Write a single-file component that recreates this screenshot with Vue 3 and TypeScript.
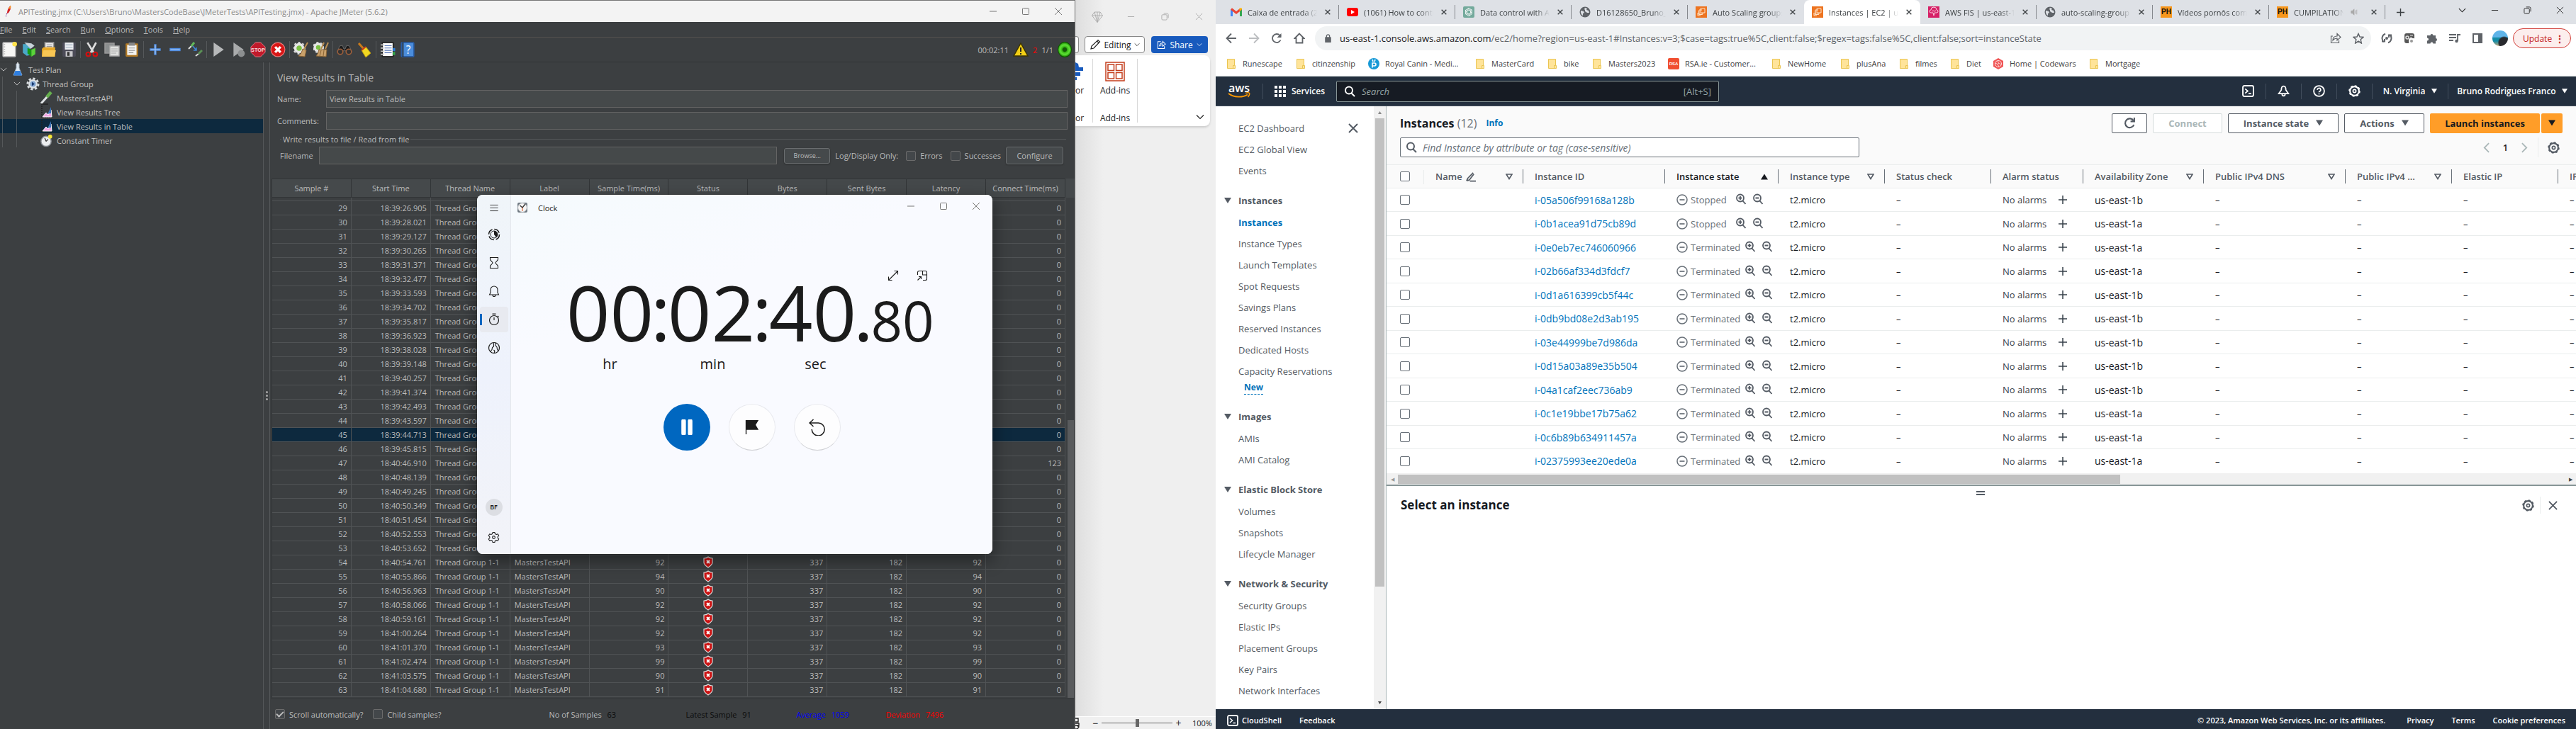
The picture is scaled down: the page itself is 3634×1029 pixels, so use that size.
<script setup lang="ts">
import { h } from 'vue'

const glyphs: Record<string, [string, string]> = {
  feather: ['0 0 16 24', '<path d="M12 1C8 4 6 9 5 16l3-1c3-4 5-9 4-14z" fill="#d22128" stroke="none"/><path d="M12 1c-2 2-3 4-4 7l4-2c1-2 0-4 0-5z" fill="#f69923" stroke="none"/><path d="M5 16l-2 6" stroke="#6d2f8c" stroke-dasharray="2 2"/>'],
  min: ['0 0 12 12', '<path d="M1 6h10" stroke-width="1"/>'],
  max: ['0 0 12 12', '<rect x="1.500" y="1.500" width="9" height="9" rx="1" stroke-width="1"/>'],
  restore: ['0 0 12 12', '<rect x="1" y="3" width="8" height="8" rx="1.500" stroke-width="1"/><path d="M4 1h5a2 2 0 0 1 2 2v5" stroke-width="1"/>'],
  close: ['0 0 12 12', '<path d="M1 1l10 10M11 1L1 11" stroke-width="1"/>'],
  closeBold: ['0 0 12 12', '<path d="M1 1l10 10M11 1L1 11" stroke-width="2"/>'],
  down: ['0 0 12 12', '<path d="M1 3.500l5 5 5-5" stroke-width="1.200"/>'],
  newFile: ['0 0 20 20', '<rect x="2" y="1" width="16" height="18" rx="1" fill="#f6f6f4" stroke="#bbb"/><path d="M4 3v14" stroke="#aaa" stroke-dasharray="1 2"/><circle cx="17" cy="3" r="3" fill="#ffe24a" stroke="none"/>'],
  templates: ['0 0 20 20', '<path d="M2 3h9v14l-4 1-5-4z" fill="#4aa8c8" stroke="none"/><path d="M4 1l9 1 4 3-5 4z" fill="#c8d4da" stroke="none"/><path d="M8 8l5 2v9l-5-4z" fill="#159a12" stroke="none"/><path d="M13 10l5-2v8l-5 3z" fill="#5ad33a" stroke="none"/>'],
  open: ['0 0 20 20', '<path d="M5 1h11v8H5z" fill="#eee" stroke="#999"/><path d="M7 4h7M7 6h7" stroke="#999" stroke-width="1"/><path d="M1 9l2-2h15v12H1z" fill="#e8a928" stroke="none"/><path d="M3 11h16l-2 8H1z" fill="#f8c754" stroke="none"/>'],
  save: ['0 0 20 20', '<rect x="2" y="1" width="17" height="18" rx="1" fill="#4c4c58" stroke="none"/><rect x="5" y="1" width="11" height="9" fill="#eef0f3" stroke="none"/><path d="M6 4h9M6 7h9" stroke="#9ab" stroke-width="1"/><rect x="6" y="12" width="9" height="7" fill="#c9c9cc" stroke="none"/><rect x="8" y="13" width="3" height="5" fill="#333" stroke="none"/>'],
  cut: ['0 0 20 20', '<path d="M4 1l8 13M15 1L8 14" stroke="#ddd" stroke-width="2.500"/><circle cx="5" cy="16" r="2.600" stroke="#cf1111" stroke-width="2"/><circle cx="14" cy="16" r="2.600" stroke="#cf1111" stroke-width="2"/>'],
  copy: ['0 0 22 20', '<rect x="1" y="1" width="13" height="14" fill="#8b8e8f" stroke="#999"/><rect x="8" y="5" width="13" height="14" fill="#dfe0de" stroke="#aaa"/><path d="M10 9h9M10 12h9M10 15h7" stroke="#aaa" stroke-width="1"/>'],
  paste: ['0 0 20 20', '<rect x="2" y="2" width="16" height="17" rx="1" fill="#b17a25" stroke="none"/><rect x="4" y="4" width="12" height="13" fill="#f3f3f1" stroke="none"/><rect x="6" y="1" width="8" height="4" fill="#888" stroke="none"/><path d="M6 8h8M6 11h8M6 14h6" stroke="#999" stroke-width="1"/>'],
  plusBlue: ['0 0 20 20', '<path d="M10 3v14M3 10h14" stroke="#4f8ce0" stroke-width="3"/><path d="M10 4v12M4 10h12" stroke="#a8cbf7" stroke-width="1"/>'],
  minusBlue: ['0 0 20 20', '<path d="M3 10h14" stroke="#4f8ce0" stroke-width="4"/><path d="M4 10h12" stroke="#a8cbf7" stroke-width="1"/>'],
  toggle: ['0 0 22 22', '<path d="M2 10l4-4" stroke="#ddd" stroke-width="2"/><path d="M6 6l4-5" stroke="#62b95b" stroke-width="3"/><path d="M12 20l4-3" stroke="#ddd" stroke-width="2"/><path d="M16 17l5-5" stroke="#5a9156" stroke-width="3"/><path d="M8 6l5 6M13 8v4H9" stroke="#3e86d8" stroke-width="1.500"/>'],
  play: ['0 0 20 20', '<path d="M4 1l13 9-13 9z" fill="#b7b9ba" stroke="none"/>'],
  playNo: ['0 0 20 20', '<path d="M4 1l13 9-13 9z" fill="#a9abac" stroke="none"/><circle cx="14" cy="15" r="4.500" fill="#8c8f90" stroke="none"/>'],
  stop: ['0 0 24 24', '<path d="M8 1h8l7 7v8l-7 7H8l-7-7V8z" fill="#c11a2b" stroke="#e5808a" stroke-width="1"/><text x="12" y="15.500" font-size="8" font-weight="700" font-family="Liberation Sans, sans-serif" text-anchor="middle" fill="#f7d9dc" stroke="none">STOP</text>'],
  shutdown: ['0 0 20 20', '<circle cx="10" cy="10" r="9" fill="#d81616" stroke="#f07a7a" stroke-width="1"/><path d="M6.500 6.500l7 7M13.500 6.500l-7 7" stroke="#fff" stroke-width="3"/>'],
  clear: ['0 0 22 22', '<circle cx="8" cy="9" r="5.500" fill="#7bc043" stroke="#e6e6e6" stroke-width="3.500"/><circle cx="8" cy="9" r="8" stroke="#d9d9d9" stroke-width="2" stroke-dasharray="3 3"/><path d="M20 1l-5 9" stroke="#b98d50" stroke-width="2"/><path d="M13 10l5 2-2 9-9-1c3-2 5-6 6-10z" fill="#c9a06a" stroke="#8a6434" stroke-width="1"/>'],
  clearAll: ['0 0 22 22', '<circle cx="7" cy="8" r="5" fill="#7bc043" stroke="#e6e6e6" stroke-width="3.500"/><circle cx="7" cy="8" r="7" stroke="#d9d9d9" stroke-width="2" stroke-dasharray="3 3"/><path d="M15 1l-4 9M21 1l-4 9" stroke="#b98d50" stroke-width="2"/><path d="M8 11l11 0-1 10-14-1c2-2 3-5 4-9z" fill="#c9a06a" stroke="#8a6434" stroke-width="1"/><path d="M11 12l-2 8M15 12l-1 8" stroke="#8a6434" stroke-width="1"/>'],
  binoculars: ['0 0 22 20', '<path d="M4 5l4-1 2 5h2l2-5 4 1 3 8-6 2-3-4h-2l-3 4-6-2z" fill="#1b1b1b" stroke="#666" stroke-width="1"/><circle cx="5" cy="13" r="3.800" fill="#333" stroke="#a2603a" stroke-width="1.500"/><circle cx="17" cy="13" r="3.800" fill="#333" stroke="#a2603a" stroke-width="1.500"/>'],
  broom: ['0 0 20 22', '<path d="M2 2l7 8" stroke="#c97a1b" stroke-width="3"/><path d="M6 12l6-5 7 9-7 6z" fill="#f2d821" stroke="#b89a10" stroke-width="1"/><path d="M6 12l6-5" stroke="#c83a1b" stroke-width="2"/>'],
  log: ['0 0 20 20', '<rect x="3" y="1" width="14" height="18" fill="#fafafa" stroke="#222"/><path d="M6 5h9M6 8h9M6 11h9M6 14h9" stroke="#5a78b8" stroke-width="1"/><path d="M1 4h4M1 8h4M1 12h4M1 16h4" stroke="#ccc" stroke-width="1.500"/><path d="M18 8v4" stroke="#2a7bd8" stroke-width="3"/><path d="M18 13v4" stroke="#33a84a" stroke-width="3"/>'],
  help: ['0 0 18 20', '<rect x="1" y="1" width="16" height="18" rx="1" fill="#4b8ddb" stroke="#2a5fa8"/><path d="M3 1v18" stroke="#222"/><text x="10" y="15" font-size="14" font-family="Open Sans, sans-serif" text-anchor="middle" fill="#fff" stroke="none">?</text>'],
  warn: ['0 0 22 20', '<path d="M11 1l10 18H1z" fill="#f3cf16" stroke="#3d3502" stroke-width="1.500"/><path d="M11 7v6M11 15v2" stroke="#222" stroke-width="2"/>'],
  flask: ['0 0 16 20', '<path d="M6 2h4v6l4 10H2L6 8z" fill="#dfe9f2" stroke="#9fb0bd" stroke-width="1"/><path d="M4.500 12h7L14 18.500H2z" fill="#2f7fe0" stroke="none"/><path d="M8 0v3" stroke="#eee"/>'],
  gearTree: ['0 0 20 20', '<circle cx="10" cy="10" r="8" stroke="#d9dde0" stroke-width="3" stroke-dasharray="3.500 2.700"/><circle cx="10" cy="10" r="5.500" fill="#7fa3d0" stroke="#dfe3e6" stroke-width="2.500"/><path d="M8.500 7l4 3-4 3z" fill="#15356b" stroke="none"/>'],
  dropper: ['0 0 20 20', '<path d="M2 18l9-10" stroke="#dfe2e4" stroke-width="3"/><path d="M10 9l6-7" stroke="#67b04f" stroke-width="4.500"/><path d="M2 19h10" stroke="#222"/>'],
  graph: ['0 0 16 18', '<path d="M1 0v17h14" stroke="#222" stroke-dasharray="2 1"/><path d="M2 16l5-6 3 3 4-7 1 10z" fill="#f3a7e4" stroke="#fff" stroke-width="1"/><path d="M6 12l3 0 5-10v9z" fill="#3d76b8" stroke="none"/>'],
  timer: ['0 0 20 20', '<circle cx="9" cy="11" r="7.500" fill="#eceef0" stroke="#8a8f95" stroke-width="1.500"/><path d="M9 11l-2-5M9 11l3-3" stroke="#333" stroke-width="1.300"/><circle cx="15" cy="4" r="3" fill="#f5e638" stroke="none"/>'],
  shield: ['0 0 14 17', '<path d="M7 1c2 2 4 2 6 2v6c0 3-3 5-6 7-3-2-6-4-6-7V3c2 0 4 0 6-2z" fill="#cc1212" stroke="#d8d8d8" stroke-width="1.200"/><path d="M5 6l4 4M9 6l-4 4" stroke="#fff" stroke-width="1.800"/>'],
  // Clock window
  menu: ['0 0 16 16', '<path d="M1 3h14M1 8h14M1 13h14" stroke-width="1"/>'],
  focus: ['0 0 18 18', '<circle cx="9" cy="9" r="7.500" stroke-width="1.500" stroke-dasharray="9 2.800"/><circle cx="9" cy="9" r="5" stroke-width="1"/><path d="M9 4a5 5 0 0 1 3 9l-3-4z" fill="currentColor" stroke="none"/>'],
  hourglass: ['0 0 18 18', '<path d="M3.500 1.500h11v2.500c0 2-3.500 3.500-3.500 5s3.500 3 3.500 5v2.500h-11V14c0-2 3.500-3.500 3.500-5S3.500 6 3.500 4z" stroke-width="1.100"/>'],
  bellThin: ['0 0 18 18', '<path d="M9 2a5 5 0 0 0-5 5v4l-1.500 3h13L14 11V7a5 5 0 0 0-5-5zM7 14.500a2 2 0 0 0 4 0" stroke-width="1.100"/>'],
  stopwatch: ['0 0 18 18', '<circle cx="9" cy="10" r="6.500" stroke-width="1.200"/><path d="M9 6v4M6.500 1.200h5M14 4l1.500 1.500" stroke-width="1.200"/>'],
  world: ['0 0 18 18', '<circle cx="9" cy="9" r="7.500" stroke-width="1.200"/><path d="M3.500 14.500l2.500-3 .5-3 2-1.500V4L8 1.700M10.500 1.800l.5 3.700 2 2.500.5 3 1.500 2.500M8.500 12l1.500 1.500-1 3" stroke-width="1.100"/>'],
  gearThin: ['0 0 18 18', '<path d="M7.500 1.500h3l.5 2.300 2 1 2.200-.8 1.500 2.600-1.700 1.500v1.800l1.700 1.500-1.500 2.600-2.200-.8-2 1-.5 2.300h-3L7 14.200l-2-1-2.200.8-1.500-2.600L3 9.900V8.100L1.300 6.600 2.800 4l2.200.8 2-1z" stroke-width="1.100" stroke-linejoin="round"/><circle cx="9" cy="9" r="2" stroke-width="1.100"/>'],
  clockApp: ['0 0 16 16', '<rect x="1" y="1" width="14" height="14" rx="2" fill="#6d7780" stroke="none"/><circle cx="8" cy="8" r="6.500" fill="#f6f6f6" stroke="#9aa1a6" stroke-width="1"/><path d="M4.500 5L8 8l4-5" stroke="#333" stroke-width="1.300"/><path d="M8 8v5" stroke="#d9541e" stroke-width="1"/>'],
  expand: ['0 0 16 16', '<path d="M1.500 14.500l13-13M9.500 1.500h5v5M1.500 9.500v5h5" stroke-width="1.100"/>'],
  pip: ['0 0 16 16', '<path d="M1.500 7V3.500a2 2 0 0 1 2-2h9a2 2 0 0 1 2 2v9a2 2 0 0 1-2 2H9M8.500 1.500V7h6M1.500 14.500l5-5M3 9.500h3.500V13" stroke-width="1.100"/>'],
  pause: ['0 0 24 24', '<path d="M5 2.500a2 2 0 0 1 4 0v19a2 2 0 0 1-4 0zM15 2.500a2 2 0 0 1 4 0v19a2 2 0 0 1-4 0z" fill="currentColor" stroke="currentColor" stroke-width="3"/>'],
  flag: ['0 0 24 24', '<path d="M2 23V1h20l-4.500 7.500L22 16H3.500v7z" fill="currentColor" stroke="none"/>'],
  undo: ['0 0 24 24', '<path d="M6.500 1L1 6l5.500 5M1 6h12.500a9 9 0 1 1-9.300 9" stroke-width="1.500"/>'],
  // Word
  gem: ['0 0 16 16', '<path d="M4 1h8l3.500 5L8 15.500.5 6zM.5 6h15M4 1l4 14.500L12 1M8 1v14" stroke-width=".9"/>'],
  pencil: ['0 0 16 16', '<path d="M2 14l1-4 9-8.500 2.500 2.500L6 13z M10.500 3l2.500 2.500" stroke-width="1.200"/>'],
  share: ['0 0 14 14', '<path d="M6 2H1.500v10.500h10V9M4 9c0-3.500 2-5 5-5V1.500L13 5.500 9 9V6.500C7 6.500 5 7 4 9z" stroke-width="1.100"/>'],
  addins: ['0 0 28 28', '<rect x="1" y="1" width="26" height="26" stroke-width="1.500"/><path d="M4 4h8.500v8.500H4zM15.500 4H24v8.500h-8.500zM4 15.500h8.500V24H4zM15.500 15.500H24V24h-8.500z" stroke-width="1.500"/>'],
  editor: ['0 0 12 28', '<path d="M0 1l4 2 1 5-5 2zM0 8h11v5H0zM0 15h7v5H0zM0 22h2v4H0z" fill="currentColor" stroke="none"/>'],
  page: ['0 0 8 16', '<path d="M0 1h4v5H0M0 8h5v3H0M2 11l3 2-2 3H0" stroke-width="1.400"/>'],
  // Chrome
  gmail: ['0 0 16 16', '<path d="M1.500 14V4" stroke="#4285f4" stroke-width="3"/><path d="M14.500 14V4" stroke="#34a853" stroke-width="3"/><path d="M1 3.500l7 5.500 7-5.500" stroke="#ea4335" stroke-width="3"/><path d="M13.500 6V3.500h3" stroke="#fbbc04" stroke-width="2"/>'],
  youtube: ['0 0 16 16', '<rect y="2" width="16" height="12" rx="3" fill="#f00" stroke="none"/><path d="M6 5l5 3-5 3z" fill="#fff" stroke="none"/>'],
  gpt: ['0 0 16 16', '<rect width="16" height="16" rx="2" fill="#74aa9c" stroke="none"/><path d="M8 2.500l4.500 2.700v5.500L8 13.500l-4.500-2.800V5.200zM8 5l2.500 1.500v3L8 11 5.500 9.500v-3zM8 2.500L5.500 6.500M12.500 5.200L8 5M12.500 10.700l-2-4.200M8 13.500l2.500-4M3.500 10.700L8 11M3.500 5.200l2 4.300" stroke="#fff" stroke-width=".8"/>'],
  globe: ['0 0 16 16', '<circle cx="8" cy="8" r="7.500" fill="#5f6368" stroke="none"/><path d="M2 6l4 1 1 2-2 1v3C3 12 1.500 9 2 6zM8 2l3 1-1 2 3 1 1 3-3 0-3-2V5L7 4z" fill="#dee1e6" stroke="none"/>'],
  ec2: ['0 0 16 16', '<rect width="16" height="16" fill="#ed7421" stroke="none"/><path d="M7 3h6v6H7zM5 6.500H4.500v5h5V11M9 5H5v6h5V9" stroke="#ffe3c7" stroke-width="1"/><path d="M3 9v4h4" stroke="#ffe3c7" stroke-width="1"/>'],
  fis: ['0 0 16 16', '<rect width="16" height="16" fill="#d62167" stroke="none"/><path d="M4 9a2 2 0 0 1 0-4 4 4 0 0 1 8 0 2 2 0 0 1 0 4H9l-1 4-1-4zM5 7l2-1 2 1 2-1" stroke="#fbd0e0" stroke-width="1"/>'],
  speaker: ['0 0 12 12', '<path d="M1 4h2l3-3v10L3 8H1zM8 3v6M10.500 2v8" fill="currentColor" stroke-width="1"/>'],
  plus: ['0 0 14 14', '<path d="M7 1v12M1 7h12"/>'],
  back: ['0 0 16 16', '<path d="M15 8H2M8 1.500L1.500 8 8 14.500" stroke-width="1.800"/>'],
  fwd: ['0 0 16 16', '<path d="M1 8h13M8 1.500L14.500 8 8 14.500" stroke-width="1.800"/>'],
  reload: ['0 0 16 16', '<path d="M13.500 10.500A6 6 0 1 1 12.500 4L14 5.500" stroke-width="1.800"/><path d="M14.500 1v6h-6z" fill="currentColor" stroke="none"/>'],
  home: ['0 0 16 16', '<path d="M8 1.500L1.500 8H3.500v6.500h9V8h2z" stroke-width="1.800"/>'],
  lock: ['0 0 10 14', '<rect y="5" width="10" height="9" rx="1" fill="currentColor" stroke="none"/><path d="M2.500 6V3.500a2.500 2.500 0 0 1 5 0V6"/>'],
  shareOut: ['0 0 16 16', '<path d="M4 5H1.500v9.500h11V11M4 11c0-4 2-6 6-6V1.500L15 6.500 10 11V8C7 8 5.500 9 4 11z" stroke-width="1.200"/>'],
  star: ['0 0 16 16', '<path d="M8 1.500l2 4.500 5 .5-3.800 3.300L12.300 15 8 12.200 3.700 15l1.100-5.200L1 6.500 6 6z" stroke-width="1.500"/>'],
  sync: ['0 0 16 16', '<path d="M6 1.800a6.500 6.500 0 0 0-2 11.300M10 14.200a6.500 6.500 0 0 0 2-11.300M1 12.500h4V9M15 3.500h-4V7" stroke-width="2"/><circle cx="8" cy="8" r="2" fill="currentColor" stroke="none"/>'],
  extApp: ['0 0 16 16', '<rect x="1" y="1" width="14" height="14" rx="3" fill="#575757" stroke="none"/><circle cx="5" cy="7" r="2" stroke="#ddd"/><path d="M9 4h4M9 7h3" stroke="#bbb"/><rect x="7" y="8" width="9" height="8" rx="2" fill="#fff" stroke="none"/><circle cx="11" cy="12" r="2" fill="#999" stroke="none"/>'],
  puzzle: ['0 0 16 16', '<path d="M1 4h4.500a2 2 0 1 1 4 0H13v4a2 2 0 1 1 0 4v3.500H9.500a2 2 0 0 0-4 0H1v-4a2 2 0 0 0 0-4z" fill="currentColor" stroke="none"/>'],
  media: ['0 0 16 16', '<path d="M0 3h10M0 7h10M0 11h6M12 12V3h4" stroke-width="1.800"/><circle cx="10.500" cy="12" r="2.200" fill="currentColor" stroke="none"/>'],
  panel: ['0 0 14 14', '<path d="M1 1h12v12H1zM10 1v12" stroke-width="2"/><rect x="8" y="1" width="5" height="12" fill="currentColor" stroke="none"/>'],
  folder: ['0 0 12 14', '<path d="M.5.5h10v9h1v4h-11z" fill="#ffe49a" stroke="#eac551" stroke-width="1"/><path d="M8.500 13.500v-4h2" stroke="#eac551" stroke-width="1"/>'],
  royal: ['0 0 16 16', '<circle cx="8" cy="8" r="8" fill="#1799d6" stroke="none"/><path d="M6 13.500V7h3a2 2 0 0 1 0 4H6M6 2l1 3M10 2L9 5" stroke="#fff" stroke-width="1.600"/>'],
  rsa: ['0 0 16 16', '<rect width="16" height="16" rx="2" fill="#f04e30" stroke="none"/><text x="8" y="10" font-size="6" font-weight="700" font-family="Liberation Sans, sans-serif" text-anchor="middle" fill="#fff" stroke="none">RSA</text>'],
  codewars: ['0 0 16 16', '<path d="M8 0l7 4v8l-7 4-7-4V4z" fill="#f05656" stroke="none"/><circle cx="8" cy="8" r="4.500" stroke="#fcdcdc" stroke-width="1"/><path d="M8 3.500c-2 2 2 3 0 4.500s2 3 0 4.500M3.500 8c2-2 3 2 4.500 0s3 2 4.500 0" stroke="#fcdcdc" stroke-width="1"/>'],
  // AWS
  smile: ['0 0 32 9', '<path d="M1 2c8 6 20 6 27 1.500" stroke="#f90" stroke-width="1.800"/><path d="M25 1.500c3-1 5-.5 5.500 0s0 3-2 5.500" stroke="#f90" stroke-width="1.400"/>'],
  grid: ['0 0 16 16', '<path d="M0 0h4v4H0zM6 0h4v4H6zM12 0h4v4h-4zM0 6h4v4H0zM6 6h4v4H6zM12 6h4v4h-4zM0 12h4v4H0zM6 12h4v4H6zM12 12h4v4h-4z" fill="currentColor" stroke="none"/>'],
  search: ['0 0 16 16', '<circle cx="7" cy="6.500" r="5" stroke-width="2"/><path d="M10.500 10.500L15 15" stroke-width="2"/>'],
  shell: ['0 0 16 16', '<rect x="1" y="1" width="14" height="14" rx="2" stroke-width="1.800"/><path d="M4 5l3.500 3L4 11M8.500 11.500H12" stroke-width="1.600"/>'],
  bell: ['0 0 16 16', '<path d="M8 1.500c-2 0-3 2-3 5L1.500 11.500h13L11 6.500c0-3-1-5-3-5zM6 12a2 2.500 0 0 0 4 0" stroke-width="1.700"/>'],
  question: ['0 0 16 16', '<circle cx="8" cy="8" r="7" stroke-width="1.700"/><path d="M5.800 6.500a2.200 2.200 0 1 1 2.900 2c-.5.200-.7.500-.7 1.200M8 11v1.500" stroke-width="1.600"/>'],
  gear: ['0 0 16 16', '<circle cx="8" cy="8" r="6" stroke-width="2"/><circle cx="8" cy="8" r="7" stroke-width="1.600" stroke-dasharray="2.750 2.750"/><circle cx="8" cy="8" r="2" stroke-width="1.600"/>'],
  tri: ['0 0 10 8', '<path d="M0 0h10L5 8z" fill="currentColor" stroke="none"/>'],
  triUp: ['0 0 10 8', '<path d="M0 8h10L5 0z" fill="currentColor" stroke="none"/>'],
  triOpen: ['0 0 10 9', '<path d="M1 1h8L5 7.500z" stroke-width="1.600"/>'],
  refresh: ['0 0 16 16', '<path d="M13.500 10.500A6 6 0 1 1 13 5" stroke-width="2"/><path d="M14 1v5H9" stroke-width="2"/>'],
  left: ['0 0 10 16', '<path d="M9 1L2 8l7 7" stroke-width="2"/>'],
  right: ['0 0 10 16', '<path d="M1 1l7 7-7 7" stroke-width="2"/>'],
  x: ['0 0 14 14', '<path d="M1 1l12 12M13 1L1 13" stroke-width="2"/>'],
  pen: ['0 0 16 16', '<path d="M2 14l2-4 8-8M2 14l4-1 7-9M7 14.500h9" stroke-width="1.800"/>'],
  stopped: ['0 0 16 16', '<circle cx="8" cy="8" r="7" stroke-width="1.500"/><path d="M4.500 8h7" stroke-width="1.700"/>'],
  zoomIn: ['0 0 16 16', '<circle cx="7" cy="6.500" r="5" stroke-width="1.800"/><path d="M10.500 10.500L14.500 15M7 4v5M4.500 6.500h5" stroke-width="1.800"/>'],
  zoomOut: ['0 0 16 16', '<circle cx="7" cy="6.500" r="5" stroke-width="1.800"/><path d="M10.500 10.500L14.500 15M4.500 6.500h5" stroke-width="1.800"/>'],
}

const Icon = (p: { n: string; w: number; h?: number }) =>
  h('svg', {
    viewBox: glyphs[p.n][0], width: p.w, height: p.h ?? p.w, fill: 'none', stroke: 'currentColor',
    'stroke-width': 1.5, 'aria-hidden': 'true', innerHTML: glyphs[p.n][1],
  })
Icon.props = ['n', 'w', 'h']

const menus = ['File', 'Edit', 'Search', 'Run', 'Options', 'Tools', 'Help']
const toolGroups = [
  ['newFile', 'templates', 'open', 'save'], ['cut', 'copy', 'paste'], ['plusBlue', 'minusBlue', 'toggle'],
  ['play', 'playNo', 'stop', 'shutdown'], ['clear', 'clearAll'], ['binoculars', 'broom'], ['log', 'help'],
]
const sampleCols = ['Sample #', 'Start Time', 'Thread Name', 'Label', 'Sample Time(ms)', 'Status', 'Bytes', 'Sent Bytes', 'Latency', 'Connect Time(ms)']
const starts = ['39:26.905', '39:28.021', '39:29.127', '39:30.265', '39:31.371', '39:32.477', '39:33.593', '39:34.702', '39:35.817', '39:36.923', '39:38.028', '39:39.148', '39:40.257', '39:41.374', '39:42.493', '39:43.597', '39:44.713', '39:45.815', '40:46.910', '40:48.139', '40:49.245', '40:50.349', '40:51.454', '40:52.553', '40:53.652', '40:54.761', '40:55.866', '40:56.963', '40:58.066', '40:59.161', '41:00.264', '41:01.370', '41:02.474', '41:03.575', '41:04.680']
const lastTimes = [92, 94, 90, 92, 92, 92, 93, 99, 90, 91]
// The middle columns of the first 25 rows lie behind the Clock window and stay empty.
const samples = starts.map((s, i) => ({ n: 29 + i, start: '18:' + s, time: lastTimes[i - 25], open: i >= 25, connect: i === 18 ? 123 : 0 }))

const tabs = [
  { icon: 'gmail', t: 'Caixa de entrada (2)' }, { icon: 'youtube', t: '(1061) How to control' }, { icon: 'gpt', t: 'Data control with AWS' },
  { icon: 'globe', t: 'D16128650_Bruno_R' }, { icon: 'ec2', t: 'Auto Scaling groups' }, { icon: 'ec2', t: 'Instances | EC2 | us-east', on: true },
  { icon: 'fis', t: 'AWS FIS | us-east-1' }, { icon: 'globe', t: 'auto-scaling-group' }, { icon: 'PH', t: 'Vídeos pornôs com' }, { icon: 'PH', t: 'CUMPILATION', audio: true },
]
const bookmarks = [
  { icon: 'folder', t: 'Runescape', w: 98 }, { icon: 'folder', t: 'citinzenship', w: 103 }, { icon: 'royal', t: 'Royal Canin - Medi...', w: 150 },
  { icon: 'folder', t: 'MasterCard', w: 102 }, { icon: 'folder', t: 'bike', w: 63 }, { icon: 'folder', t: 'Masters2023', w: 108 },
  { icon: 'rsa', t: 'RSA.ie - Customer...', w: 145 }, { icon: 'folder', t: 'NewHome', w: 97 }, { icon: 'folder', t: 'plusAna', w: 83 },
  { icon: 'folder', t: 'filmes', w: 72 }, { icon: 'folder', t: 'Diet', w: 61 }, { icon: 'codewars', t: 'Home | Codewars', w: 135 }, { icon: 'folder', t: 'Mortgage', w: 80 },
]
const navTop = ['EC2 Dashboard', 'EC2 Global View', 'Events']
const navGroups = [
  { t: 'Instances', items: ['Instances', 'Instance Types', 'Launch Templates', 'Spot Requests', 'Savings Plans', 'Reserved Instances', 'Dedicated Hosts', 'Capacity Reservations'] },
  { t: 'Images', items: ['AMIs', 'AMI Catalog'] },
  { t: 'Elastic Block Store', items: ['Volumes', 'Snapshots', 'Lifecycle Manager'] },
  { t: 'Network & Security', items: ['Security Groups', 'Elastic IPs', 'Placement Groups', 'Key Pairs', 'Network Interfaces'] },
]
const awsCols = [
  { t: 'Name', w: 140, f: 1 }, { t: 'Instance ID', w: 200 }, { t: 'Instance state', w: 160, f: 2 }, { t: 'Instance type', w: 150, f: 1 },
  { t: 'Status check', w: 150 }, { t: 'Alarm status', w: 130 }, { t: 'Availability Zone', w: 170, f: 1 }, { t: 'Public IPv4 DNS', w: 200, f: 1 },
  { t: 'Public IPv4 ...', w: 150, f: 1 }, { t: 'Elastic IP', w: 150 }, { t: 'IPv6 IPs', w: 150 },
]
const instances = [
  ['i-05a506f99168a128b', 'b'], ['i-0b1acea91d75cb89d', 'a'], ['i-0e0eb7ec746060966', 'a'], ['i-02b66af334d3fdcf7', 'a'],
  ['i-0d1a616399cb5f44c', 'b'], ['i-0db9bd08e2d3ab195', 'b'], ['i-03e44999be7d986da', 'b'], ['i-0d15a03a89e35b504', 'b'],
  ['i-04a1caf2eec736ab9', 'b'], ['i-0c1e19bbe17b75a62', 'a'], ['i-0c6b89b634911457a', 'a'], ['i-02375993ee20ede0a', 'a'],
]
</script>

<template>
  <div class="desktop">
    <section class="jmeter">
      <header class="jm-title">
        <Icon n="feather" :w="12" :h="22" />
        <span>APITesting.jmx (C:\Users\Bruno\MastersCodeBase\JMeterTests\APITesting.jmx) - Apache JMeter (5.6.2)</span>
        <div class="win-ctl"><button v-for="i in ['min', 'max', 'close']" :key="i" :aria-label="i"><Icon :n="i" :w="12" /></button></div>
      </header>
      <nav class="jm-menu">
        <button v-for="m in menus" :key="m"><u>{{ m[0] }}</u>{{ m.slice(1) }}</button>
      </nav>
      <div class="jm-tools">
        <div v-for="(g, gi) in toolGroups" :key="gi" class="tool-group">
          <button v-for="i in g" :key="i" :aria-label="i"><Icon :n="i" :w="22" /></button>
        </div>
        <div class="jm-status">
          <span>00:02:11</span><Icon n="warn" :w="22" :h="20" /><b>2</b><span>1/1</span><i class="lamp"></i>
        </div>
      </div>
      <div class="jm-body">
        <ul class="tree">
          <li><Icon n="down" :w="10" /><Icon n="flask" :w="16" :h="20" />Test Plan</li>
          <li class="l1"><Icon n="down" :w="10" /><Icon n="gearTree" :w="19" />Thread Group</li>
          <li class="l2"><Icon n="dropper" :w="20" />MastersTestAPI</li>
          <li class="l2"><Icon n="graph" :w="18" />View Results Tree</li>
          <li class="l2 sel"><Icon n="graph" :w="18" />View Results in Table</li>
          <li class="l2"><Icon n="timer" :w="19" />Constant Timer</li>
        </ul>
        <div class="splitter"><i></i><i></i><i></i></div>
        <div class="results">
          <h2>View Results in Table</h2>
          <div class="form-row"><label for="jn">Name:</label><input id="jn" value="View Results in Table" /></div>
          <div class="form-row second"><label for="jc">Comments:</label><input id="jc" /></div>
          <div class="legend">Write results to file / Read from file</div>
          <div class="file-row">
            <label for="jf">Filename</label><input id="jf" class="file" />
            <button class="jbtn small">Browse...</button>
            <span class="only">Log/Display Only:</span>
            <label class="check"><input type="checkbox" />Errors</label>
            <label class="check"><input type="checkbox" />Successes</label>
            <button class="jbtn">Configure</button>
          </div>
          <div class="grid-wrap">
            <table class="samples">
              <thead><tr><th v-for="c in sampleCols" :key="c">{{ c }}</th></tr></thead>
              <tbody>
                <tr class="stub"><td v-for="c in sampleCols" :key="c"></td></tr>
                <tr v-for="s in samples" :key="s.n" :class="{ sel: s.n === 45 }">
                  <td>{{ s.n }}</td><td>{{ s.start }}</td><td class="lt">Thread Group<template v-if="s.open"> 1-1</template></td>
                  <template v-if="s.open">
                    <td class="lt">MastersTestAPI</td><td>{{ s.time }}</td>
                    <td class="ct"><Icon n="shield" :w="14" :h="17" /></td><td>337</td><td>182</td><td>{{ s.time }}</td>
                  </template>
                  <template v-else><td v-for="k in 6" :key="k"></td></template>
                  <td>{{ s.connect }}</td>
                </tr>
              </tbody>
            </table>
            <div class="jm-scroll"><i></i></div>
          </div>
          <footer class="jm-foot">
            <label class="check"><input type="checkbox" checked />Scroll automatically?</label>
            <label class="check"><input type="checkbox" />Child samples?</label>
            <div class="stats">
              <span class="s1">No of Samples <b>63</b></span><span class="s2">Latest Sample <b>91</b></span>
              <span class="s3">Average <b>1059</b></span><span class="s4">Deviation <b>7496</b></span>
            </div>
          </footer>
        </div>
      </div>
    </section>

    <section class="word">
      <header>
        <button v-for="i in ['gem', 'min', 'restore', 'close']" :key="i" :aria-label="i"><Icon :n="i" :w="i === 'gem' ? 16 : 11" /></button>
      </header>
      <div class="word-actions">
        <i class="sliver"></i>
        <button class="edit"><Icon n="pencil" :w="16" />Editing<Icon n="down" :w="8" /></button>
        <button class="share"><Icon n="share" :w="13" />Share<Icon n="down" :w="8" /></button>
      </div>
      <div class="ribbon">
        <div class="rib ed"><Icon n="editor" :w="12" :h="28" /><span>or</span><small>or</small></div>
        <div class="rib ad"><Icon n="addins" :w="28" /><span>Add-ins</span><small>Add-ins</small></div>
        <button class="fold" aria-label="Collapse ribbon"><Icon n="down" :w="12" /></button>
      </div>
      <footer><Icon n="page" :w="8" :h="16" /><button aria-label="Zoom out">−</button><input type="range" min="0" max="200" value="100" aria-label="Zoom" /><button aria-label="Zoom in">+</button><span>100%</span></footer>
    </section>

    <section class="chrome">
      <header class="tabs">
        <div v-for="(t, i) in tabs" :key="i" class="tab" :class="{ on: t.on, before: i === 4 }">
          <b v-if="t.icon === 'PH'" class="ph">PH</b><Icon v-else :n="t.icon" :w="16" />
          <span>{{ t.t }}</span><Icon v-if="t.audio" class="aud" n="speaker" :w="10" />
          <button aria-label="Close tab"><Icon n="closeBold" :w="8" /></button>
        </div>
        <button class="new-tab" aria-label="New tab"><Icon n="plus" :w="13" /></button>
        <div class="win-ctl cr"><button v-for="i in ['down', 'min', 'restore', 'close']" :key="i" :aria-label="i"><Icon :n="i" :w="11" /></button></div>
      </header>
      <div class="bar">
        <button v-for="i in ['back', 'fwd', 'reload', 'home']" :key="i" :class="i" :aria-label="i"><Icon :n="i" :w="16" /></button>
        <div class="omni">
          <Icon n="lock" :w="9" :h="12" />
          <span><b>us-east-1.console.aws.amazon.com</b>/ec2/home?region=us-east-1#Instances:v=3;$case=tags:true%5C,client:false;$regex=tags:false%5C,client:false;sort=instanceState</span>
          <Icon n="shareOut" :w="16" /><Icon n="star" :w="16" />
        </div>
        <div class="exts"><button v-for="i in ['sync', 'extApp', 'puzzle', 'media', 'panel']" :key="i" :aria-label="i"><Icon :n="i" :w="i === 'panel' ? 14 : 16" /></button></div>
        <i class="face"></i>
        <button class="update">Update<span>⋮</span></button>
      </div>
      <nav class="marks">
        <a v-for="b in bookmarks" :key="b.t" href="#" :style="{ width: b.w + 'px' }"><i><Icon :n="b.icon" :w="b.icon === 'folder' ? 12 : 16" :h="b.icon === 'folder' ? 14 : 16" /></i>{{ b.t }}</a>
      </nav>

      <header class="aws-nav">
        <a href="#" class="logo"><span>aws</span><Icon n="smile" :w="32" :h="9" /></a>
        <button class="services"><Icon n="grid" :w="16" />Services</button>
        <label class="aws-search"><Icon n="search" :w="16" /><input placeholder="Search" aria-label="Search" /><kbd>[Alt+S]</kbd></label>
        <div class="aws-right">
          <button v-for="i in ['shell', 'bell', 'question', 'gear']" :key="i" class="ib" :aria-label="i"><Icon :n="i" :w="17" /></button>
          <button class="region">N. Virginia<Icon n="tri" :w="8" :h="7" /></button>
          <button class="user">Bruno Rodrigues Franco<Icon n="tri" :w="8" :h="7" /></button>
        </div>
      </header>

      <div class="aws-body">
        <aside>
          <nav>
            <ul class="top"><li v-for="t in navTop" :key="t"><a href="#">{{ t }}</a></li></ul>
            <button class="shut" aria-label="Close navigation"><Icon n="x" :w="14" /></button>
            <div v-for="g in navGroups" :key="g.t" class="group">
              <h3><Icon n="tri" :w="10" :h="8" />{{ g.t }}</h3>
              <ul><li v-for="t in g.items" :key="t"><a href="#" :class="{ on: t === 'Instances' }">{{ t }}</a><em v-if="t === 'Capacity Reservations'">New</em></li></ul>
            </div>
          </nav>
          <div class="vscroll"><Icon n="triUp" :w="7" :h="4" /><i></i><Icon n="tri" :w="7" :h="4" /></div>
        </aside>
        <main>
          <div class="top-line">
            <h1>Instances <span>(12)</span></h1><a href="#">Info</a>
            <div class="acts">
              <button class="ab refresh" aria-label="Refresh"><Icon n="refresh" :w="17" /></button>
              <button class="ab connect" disabled>Connect</button>
              <button class="ab state">Instance state<Icon n="tri" :w="10" :h="9" /></button>
              <button class="ab actions">Actions<Icon n="tri" :w="10" :h="9" /></button>
              <button class="ab launch">Launch instances</button><button class="ab launch drop" aria-label="Launch options"><Icon n="tri" :w="10" :h="9" /></button>
            </div>
          </div>
          <div class="find-line">
            <label><Icon n="search" :w="16" /><input placeholder="Find Instance by attribute or tag (case-sensitive)" aria-label="Find Instance" /></label>
            <div class="pager"><button aria-label="Previous"><Icon n="left" :w="9" :h="15" /></button><b>1</b><button aria-label="Next"><Icon n="right" :w="9" :h="15" /></button><button class="pref" aria-label="Preferences"><Icon n="gear" :w="17" /></button></div>
          </div>
          <div class="table-clip">
            <table class="inst">
              <colgroup><col class="ck" /><col v-for="c in awsCols" :key="c.t" :style="{ width: c.w + 'px' }" /></colgroup>
              <thead><tr>
                <th class="first"><input type="checkbox" aria-label="Select all" /></th>
                <th v-for="c in awsCols" :key="c.t" :class="{ sorted: c.f === 2 }"><div>{{ c.t }}<Icon v-if="c.t === 'Name'" class="pen" n="pen" :w="15" /><Icon v-if="c.f" class="sort" :n="c.f === 2 ? 'triUp' : 'triOpen'" :w="10" :h="9" /></div></th>
              </tr></thead>
              <tbody>
                <tr v-for="(r, i) in instances" :key="r[0]">
                  <td class="first"><input type="checkbox" :aria-label="r[0]" /></td><td></td><td class="id"><a href="#">{{ r[0] }}</a></td>
                  <td><div class="st" :class="{ stop: i < 2 }"><Icon n="stopped" :w="16" /><span>{{ i < 2 ? 'Stopped' : 'Terminated' }}</span><Icon n="zoomIn" :w="16" /><Icon n="zoomOut" :w="16" /></div></td>
                  <td>t2.micro</td><td>–</td><td><div class="al">No alarms<Icon n="plus" :w="14" /></div></td><td class="id">us-east-1{{ r[1] }}</td><td>–</td><td>–</td><td>–</td><td>–</td>
                </tr>
              </tbody>
            </table>
          </div>
          <div class="hscroll"><span>◀</span><i></i><span class="r">▶</span></div>
          <div class="split">
            <button class="grip" aria-label="Resize panel"></button>
            <h2>Select an instance</h2>
            <div><button aria-label="Panel preferences"><Icon n="gear" :w="17" /></button><button aria-label="Close panel"><Icon n="x" :w="13" /></button></div>
          </div>
        </main>
      </div>
      <footer class="aws-foot">
        <button><Icon n="shell" :w="16" />CloudShell</button><a href="#" class="fb">Feedback</a>
        <span>© 2023, Amazon Web Services, Inc. or its affiliates.</span><a href="#">Privacy</a><a href="#">Terms</a><a href="#">Cookie preferences</a>
      </footer>
    </section>

    <section class="clock">
      <nav>
        <button aria-label="Menu"><Icon n="menu" :w="16" :h="13" /></button>
        <button v-for="i in ['focus', 'hourglass', 'bellThin', 'stopwatch', 'world']" :key="i" :class="{ on: i === 'stopwatch' }" :aria-label="i"><Icon :n="i" :w="18" /></button>
        <span class="bf">BF</span>
        <button aria-label="Settings"><Icon n="gearThin" :w="17" /></button>
      </nav>
      <div class="clock-main">
        <header><Icon n="clockApp" :w="16" />Clock<div class="win-ctl ck-ctl"><button v-for="i in ['min', 'max', 'close']" :key="i" :aria-label="i"><Icon :n="i" :w="12" /></button></div></header>
        <div class="views"><button aria-label="Expand"><Icon n="expand" :w="16" /></button><button aria-label="Keep on top"><Icon n="pip" :w="16" /></button></div>
        <div class="digits"><span>00</span><span>:</span><span>02</span><span>:</span><span>40</span><span>.</span><span class="frac">80</span></div>
        <div class="units"><span>hr</span><span>min</span><span>sec</span></div>
        <div class="keys"><button class="pause" aria-label="Pause"><Icon n="pause" :w="24" :h="22" /></button><button aria-label="Lap"><Icon n="flag" :w="22" :h="24" /></button><button aria-label="Reset"><Icon n="undo" :w="24" /></button></div>
      </div>
    </section>
  </div>
</template>

<style>
html, body { margin: 0; }
body { overflow: hidden; }
</style>

<style scoped>
* { box-sizing: border-box; }
.desktop { position: relative; display: grid; grid-template-columns: 1517fr 198fr 1919fr; height: 100vh; overflow: hidden; font-family: "Open Sans", "Noto Sans", sans-serif; font-size: 11px; }
.desktop > section { min-width: 0; display: flex; flex-direction: column; overflow: hidden; }
button { font: inherit; color: inherit; background: none; border: 0; padding: 0; display: flex; align-items: center; justify-content: center; }
svg { flex: none; display: block; }
ul { list-style: none; margin: 0; padding: 0; }
h1, h2, h3 { margin: 0; }
a { text-decoration: none; color: inherit; }
i { font-style: normal; }
input { font: inherit; color: inherit; margin: 0; min-width: 0; }
.win-ctl { margin-left: auto; display: flex; color: #777; }
.win-ctl button { width: 46px; }

/* JMeter */
.jmeter { background: #3c3f41; color: #bbb; border-right: 1px solid #6c6c6c; }
.jm-title { height: 31px; flex: none; background: #f3f3f3; border-top: 1px solid #757575; color: #8b8b8b; display: flex; align-items: center; gap: 8px; padding: 0 0 0 6px; }
.jm-menu { height: 22px; flex: none; display: flex; align-items: center; gap: 14px; border-bottom: 1px solid #55524f; }
.jm-tools { height: 35px; flex: none; display: flex; align-items: center; border-bottom: 1px solid #323537; margin-left: -1px; }
.tool-group { display: flex; }
.tool-group + .tool-group { border-left: 1px solid #55585a; margin-left: 2px; padding-left: 2px; }
.tool-group button { width: 28px; height: 24px; }
.jm-status { margin-left: auto; display: flex; align-items: center; gap: 6px; padding-right: 4px; }
.jm-status b { color: #f00; font-weight: 400; }
.lamp { width: 20px; height: 22px; border-radius: 50%; background: radial-gradient(circle, #145a08 0 20%, #37b714 28%, #5ee236 50%, #1c8a04 75%); border: 1px solid #0e5400; }
.jm-body { flex: 1; min-height: 0; display: flex; }
.tree { width: 371px; flex: none; color: #c0c0c0; background: linear-gradient(#55585a, #55585a) 3px 20px / 1px 100px no-repeat, linear-gradient(#55585a, #55585a) 23px 40px / 1px 80px no-repeat; }
.tree li { height: 20px; display: flex; align-items: center; gap: 4px; }
.tree li:first-child { gap: 7px; }
.tree .l1 { padding-left: 19px; gap: 8px; }
.tree .l1 svg + svg { margin-right: -4px; }
.tree .l2 { padding-left: 56px; }
.tree .l2 svg { width: 20px; }
.tree .sel { background: linear-gradient(#4b565e, #4b565e) 3px 0 / 1px 20px no-repeat, linear-gradient(#4b565e, #4b565e) 23px 0 / 1px 20px no-repeat, #0d293e; }
.splitter { width: 10px; flex: none; border: solid #55585a; border-width: 0 1px; display: flex; flex-direction: column; align-items: center; justify-content: center; gap: 2px; }
.splitter i { width: 3px; height: 3px; border-radius: 50%; background: #aaa; }
.results { flex: 1; min-width: 0; display: flex; flex-direction: column; padding: 10px 0 0 2px; }
.results h2 { font-size: 14px; font-weight: 400; line-height: 24px; margin: 0 0 5px 8px; }
.form-row { display: flex; align-items: center; padding: 0 10px 0 8px; height: 25px; }
.form-row label { width: 69px; }
.form-row.second { margin-top: 6px; }
.results input:not([type]) { flex: 1; height: 25px; background: #45494a; border: 1px solid #646464; padding: 0 4px; }
.legend { display: flex; align-items: center; gap: 2px; height: 16px; margin: 5px 12px 3px 12px; }
.legend::before { content: ""; width: 2px; height: 1px; background: #55585a; }
.legend::after { content: ""; flex: 1; height: 1px; background: #55585a; }
.file-row { display: flex; align-items: center; padding: 0 16px 0 12px; height: 25px; }
.file-row > label:first-child { width: 55px; }
.jbtn { width: 81px; height: 25px; border: 1px solid #6b6e70; border-radius: 3px; background: #45494b; box-shadow: 0 1px 2px #2b2d2e; margin-left: 7px; }
.jbtn.small { width: 65px; height: 22px; margin-left: 10px; font-size: 9px; }
.only { margin: 0 11px 0 7px; }
.check { display: flex; align-items: center; gap: 6px; }
.check + .check { margin-left: 11px; }
.check input { appearance: none; width: 14px; height: 14px; border: 1px solid #6b6b6b; border-radius: 2px; background: #43474a; display: grid; place-items: center; }
.check input:checked::before { content: ""; width: 8px; height: 4px; border: solid #bbb; border-width: 0 0 2px 2px; transform: rotate(-45deg); margin-top: -3px; }
.grid-wrap { display: flex; margin-top: 20px; height: 735px; border-bottom: 1px solid #323537; border-left: 1px solid #323537; }
.samples { flex: 1; width: 100%; min-width: 0; border-collapse: separate; border-spacing: 0; table-layout: fixed; height: max-content; }
.samples th { height: 27px; font-weight: 400; padding: 0; background: #45494b; border: solid #323537; border-width: 1px 1px 1px 0; white-space: nowrap; }
.samples td { height: 20px; padding: 0 5px 0 0; text-align: right; line-height: 19px; border: solid #505355; border-width: 0 1px 1px 0; white-space: nowrap; }
.samples .stub td { height: 5px; line-height: 4px; }
.samples .sel td { background: #0d293e; }
.samples .lt { text-align: left; padding-left: 6px; }
.samples .ct svg { margin: 0 auto; }
.samples td.ct { padding: 0; }
.jm-scroll { width: 13px; flex: none; border-top: 27px solid #45494b; display: flex; flex-direction: column; justify-content: flex-end; padding: 0 1px 1px 3px; }
.jm-scroll i { height: 392px; background: #595b5d; }
.jm-foot { flex: 1; display: flex; align-items: center; padding-left: 5px; }
.jm-foot .check + .check { margin-left: 14px; }
.stats { display: flex; color: #0b0b0b; padding-left: 152px; }
.stats b { font-weight: 400; margin-left: 5px; }
.stats span { width: 193px; }
.stats .s1 { color: #bbb; }
.stats .s1 b { color: #0b0b0b; }
.stats .s2 { width: 156px; }
.stats .s3 { color: #00f; width: 126px; }
.stats .s4 { color: #f00; width: auto; }

/* Word */
.word { background: linear-gradient(90deg, #dedede, #efefef 20%); color: #222; }
.word header { height: 47px; flex: none; display: flex; color: #aaa; padding-left: 7px; }
.word header button { width: 48px; }
.word-actions { display: flex; align-items: center; margin-top: 4px; height: 24px; flex: none; }
.sliver { width: 5px; height: 24px; border: 1px solid #888; border-left: 0; border-radius: 0 4px 4px 0; background: #fff; }
.edit, .share { height: 24px; border-radius: 4px; gap: 4px; font-size: 12px; }
.edit { width: 85px; margin-left: 8px; border: 1px solid #888; background: #fff; }
.share { width: 80px; margin-left: 9px; background: #185abd; color: #fff; gap: 5px; }
.ribbon { display: flex; align-items: stretch; background: #fff; margin: 3px 8px 0 0; height: 100px; flex: none; border-radius: 0 8px 8px 0; box-shadow: 0 2px 3px #ccc; padding: 5px 0; font-size: 12px; }
.rib { border-right: 1px solid #d8d8d8; display: flex; flex-direction: column; }
.rib span { margin-top: 4px; line-height: 18px; }
.rib small { margin-top: auto; font-size: 12px; line-height: 12px; }
.rib svg { margin-top: 4px; }
.ed { width: 25px; color: #185abd; }
.ed span, .ed small { color: #222; }
.ad { width: 63px; align-items: center; }
.ad svg { color: #c43e1c; }
.fold { margin: auto 8px 0 auto; padding-bottom: 2px; }
.word footer { margin-top: auto; height: 18px; flex: none; border-top: 1px solid #fff; background: #f0f0f0; display: flex; align-items: center; }
.word footer button { width: 17px; font-size: 14px; line-height: 14px; }
.word footer svg + button { margin-left: 12px; }
.word footer input { appearance: none; width: 100px; height: 11px; background: linear-gradient(#666, #666) 0 5px / 100% 1px no-repeat; }
.word footer input::-webkit-slider-thumb { appearance: none; width: 5px; height: 11px; background: #666; }
.word footer span { margin-left: 11px; }

/* Browser */
.chrome { background: #fff; color: #3c4043; }
.tabs { height: 34px; flex: none; background: #dee1e6; display: flex; padding-left: 10px; }
.tab { width: 164px; flex: none; display: flex; align-items: center; padding: 0 11px; position: relative; }
.tab::after { content: ""; position: absolute; right: 0; top: 7px; height: 20px; width: 1px; background: #85888d; }
.tab.on { background: #fff; border-radius: 8px 8px 0 0; }
.tab.on::after, .tab.before::after { display: none; }
.tab span { flex: 1; margin: 0 10px 0 8px; white-space: nowrap; overflow: hidden; -webkit-mask: linear-gradient(90deg, #000 80%, transparent); mask: linear-gradient(90deg, #000 80%, transparent); }
.tab .aud { margin-right: 18px; color: #aaa; }
.tab button { width: 10px; height: 16px; }
.ph { width: 16px; height: 16px; background: #f7971d; color: #111; font: 700 10px/16px "Liberation Sans", sans-serif; text-align: center; }
.new-tab { width: 43px; }
.win-ctl.cr { color: #222; height: 28px; }
.bar { height: 40px; flex: none; display: flex; align-items: center; padding: 0 7px 0 6px; color: #5f6368; }
.bar > button { width: 32px; height: 32px; }
.bar .fwd { color: #bbbdc0; }
.omni { flex: 1; min-width: 0; height: 34px; border-radius: 17px; background: #f1f3f4; display: flex; align-items: center; padding: 0 10px 0 14px; margin-left: 6px; font-size: 13px; gap: 12px; }
.omni span { flex: 1; white-space: nowrap; overflow: hidden; }
.omni b { font-weight: 400; color: #202124; }
.omni svg + svg { margin-left: 4px; }
.exts { display: flex; margin-left: 6px; }
.exts button { width: 32px; height: 24px; }
.face { width: 22px; height: 22px; border-radius: 50%; margin: 0 7px 0 5px; background: radial-gradient(ellipse at 75% 78%, #27292e 0 30%, transparent 38%), linear-gradient(#5fb4e8 0 40%, #138ca6 50% 68%, #c2a578); }
.bar .update { width: 82px; height: 28px; border: 1px solid #d13c36; border-radius: 14px; background: #fceeed; color: #c5221f; font-size: 12px; justify-content: space-between; padding: 0 8px 0 13px; }
.update span { font-weight: 700; font-size: 14px; }
.marks { height: 34px; flex: none; display: flex; align-items: center; padding: 0 0 2px 14px; border-bottom: 1px solid #d5dbdb; }
.marks a { flex: none; display: flex; align-items: center; white-space: nowrap; }
.marks i { width: 24px; padding-left: 0; display: flex; }
.marks svg[width="12"] { margin-left: 2px; }

/* AWS header */
.aws-nav { height: 42px; flex: none; background: #232f3e; border-bottom: 1px solid #414d5c; color: #fff; display: flex; align-items: center; font-size: 12px; font-weight: 600; }
.logo { width: 67px; padding-left: 17px; height: 22px; border-right: 1px solid #414d5c; display: flex; flex-direction: column; }
.logo span { font-size: 16px; line-height: 12px; width: 32px; text-align: center; }
.services { width: 103px; gap: 8px; }
.aws-search { width: 540px; height: 30px; display: flex; align-items: center; padding: 0 10px; gap: 9px; background: #161b23; border: 1px solid #879596; border-radius: 2px; font-size: 13px; font-weight: 400; }
.aws-search input, .find-line input { flex: 1; border: 0; background: none; outline: 0; padding: 0; }
.aws-search input::placeholder { font-style: italic; color: #95a5a6; }
kbd { font: inherit; color: #95a5a6; }
.aws-right { margin-left: auto; display: flex; }
.aws-right button { height: 22px; border-right: 1px solid #414d5c; }
.aws-right .ib { width: 50px; }
.aws-right .region { width: 107px; gap: 9px; }
.aws-right .user { width: 180px; border: 0; gap: 8px; }

/* AWS body */
.aws-body { flex: 1; min-height: 0; display: flex; font-size: 13px; color: #16191f; }
aside { width: 241px; flex: none; display: flex; border-right: 1px solid #aab7b8; color: #545b64; }
aside nav { flex: 1; position: relative; padding: 16px 0 0 12px; overflow: hidden; }
aside li { padding-left: 20px; line-height: 30px; }
aside h3 { display: flex; align-items: center; gap: 10px; font-size: 13px; line-height: 30px; font-weight: 700; margin-bottom: 1px; }
.group { padding-top: 12px; }
.shut { position: absolute; left: 187px; top: 24px; }
aside a.on { color: #0073bb; font-weight: 700; }
aside em { display: table; margin: -1px 0 4px 8px; font-style: normal; font-weight: 700; font-size: 12px; line-height: 18px; color: #0073bb; border-bottom: 1px dashed #0073bb; }
.vscroll { width: 17px; background: #f1f1f1; display: flex; flex-direction: column; align-items: center; padding: 7px 0; color: #888; }
.vscroll i { width: 13px; height: 661px; background: #c1c1c1; margin: 6px 0 auto; }
.vscroll svg:last-child { color: #444; }
main { flex: 1; min-width: 0; display: flex; flex-direction: column; background: #fafafa; }
.top-line { display: flex; align-items: center; height: 29px; margin-top: 9px; padding: 0 19px; }
h1 { font-size: 16px; line-height: 24px; font-weight: 700; }
h1 span { font-weight: 400; color: #687078; }
.top-line > a { color: #0073bb; font-size: 12px; font-weight: 700; margin-left: 13px; }
.acts { margin-left: auto; display: flex; gap: 8px; }
.ab { height: 28px; border: 1px solid #545b64; border-radius: 2px; background: #fff; color: #545b64; font-weight: 700; gap: 10px; }
.refresh { width: 50px; } .connect { width: 98px; border-color: #d5dbdb; color: #aab7b8; } .state { width: 156px; } .actions { width: 113px; }
.launch { width: 155px; background: #ff9d28; border: 0; color: #16191f; }
.launch.drop { width: 30px; margin-left: -6px; }
.find-line { display: flex; align-items: center; justify-content: space-between; padding: 6px 19px 10px; }
.find-line label { width: 648px; height: 28px; border: 1px solid #687078; border-radius: 2px; background: #fff; display: flex; align-items: center; gap: 8px; padding: 0 7px; color: #545b64; font-size: 14px; }
.find-line input::placeholder { font-style: italic; color: #687078; }
.pager { display: flex; align-items: center; color: #aab7b8; }
.pager b { width: 45px; text-align: center; color: #16191f; font-weight: 600; }
.pager .pref { color: #545b64; height: 28px; margin-left: 14px; padding: 0 4px 0 13px; border-left: 1px solid #eaeded; }
.table-clip { overflow: hidden; border-top: 1px solid #eaeded; }
.inst { width: 1803px; table-layout: fixed; border-collapse: separate; border-spacing: 0; background: #fff; }
.ck { width: 53px; }
.inst th, .inst td { padding: 0 0 0 16px; text-align: left; white-space: nowrap; height: 33px; border-bottom: 1px solid #eaeded; }
.inst tr:nth-child(even) td { height: 34px; }
.inst tr:last-child td { border-bottom-color: #fff; }
.inst th { background: #fafafa; color: #545b64; font-weight: 600; }
.inst th div { height: 20px; display: flex; align-items: center; border-right: 1px solid #687078; gap: 4px; }
.inst .first { padding-left: 19px; }
.inst th.first { border-right: 0; background: linear-gradient(#eaeded, #eaeded) right 7px / 1px 20px no-repeat, #fafafa; }
.inst .sort { margin-left: auto; margin-right: 14px; }
.inst .sorted { color: #16191f; }
.inst input { appearance: none; display: block; width: 14px; height: 14px; border: 1px solid #687078; border-radius: 2px; background: #fff; }
.inst a { color: #0073bb; }
.inst .id { font-size: 14px; }
.st { display: flex; align-items: center; color: #687078; }
.st span { width: 80px; padding-left: 4px; }
.st.stop span { width: 67px; }
.st svg + svg { margin-left: 8px; }
.st svg ~ svg { color: #545b64; margin-bottom: 2px; }
.al { display: flex; align-items: center; gap: 16px; color: #37404a; }
.hscroll { height: 18px; flex: none; background: #f1f1f1; border-bottom: 2px solid #879596; display: flex; align-items: center; font-size: 7px; color: #999; }
.hscroll span { width: 16px; text-align: center; }
.hscroll i { width: 1019px; height: 13px; background: #c1c1c1; }
.hscroll .r { margin-left: auto; color: #444; }
.split { flex: 1; background: #fff; padding: 0 22px 0 20px; display: grid; grid-template-columns: 1fr auto; grid-template-rows: 15px 24px; }
.grip { grid-column: 1 / 3; justify-self: center; margin-top: 7px; width: 12px; height: 6px; border: solid #545b64; border-width: 2px 0; }
.split h2 { font-size: 17px; font-weight: 700; line-height: 24px; }
.split div { display: flex; color: #545b64; }
.split div button { width: 34px; }
.split div button + button { border-left: 1px solid #eaeded; padding-left: 6px; width: 29px; }
.aws-foot { height: 28px; flex: none; background: #232f3e; color: #fff; font-size: 11px; font-weight: 600; display: flex; align-items: center; gap: 25px; padding: 3px 15px 0 16px; }
.aws-foot button { gap: 5px; }
.aws-foot span { margin: 0 5px 0 auto; }

/* Clock */
.clock { position: absolute; left: 673px; top: 275px; width: 727px; height: 507px; border-radius: 8px; background: #f8faff; box-shadow: 0 8px 24px rgba(0, 0, 0, .45), 0 0 1px #333; color: #1b1b1b; }
.desktop > .clock { flex-direction: row; }
.clock nav { width: 48px; flex: none; background: linear-gradient(#f0f5f9, #eef2fc 50%, #f2f3f8); border-right: 1px solid #e4e7ec; display: flex; flex-direction: column; align-items: center; padding-bottom: 6px; }
.clock nav button { width: 40px; height: 36px; margin-bottom: 4px; flex: none; border-radius: 4px; }
.clock nav button:first-child { margin-bottom: 2px; }
.clock nav button.on { background: linear-gradient(#0067c0, #0067c0) 0 10px / 3px 16px no-repeat, #e8eaf0; }
.clock nav button:last-child { margin: 12px 0 0; }
.bf { margin-top: auto; width: 24px; height: 24px; border-radius: 50%; background: #dcdee3; font-size: 9px; font-weight: 600; line-height: 24px; text-align: center; }
.clock-main { flex: 1; display: flex; flex-direction: column; align-items: center; background: linear-gradient(160deg, #f5fafd, #f9faff 30%); }
.clock-main header { align-self: stretch; height: 36px; display: flex; align-items: center; gap: 14px; padding-left: 8px; }
.ck-ctl { height: 32px; align-self: flex-start; }
.views { display: flex; gap: 25px; align-self: flex-end; margin: 70px 91px 1px 0; }
.digits { display: grid; grid-template-columns: 119px 24px 119px 24px 119px 24px 86px; align-items: baseline; font-size: 108px; line-height: 86px; margin-right: 4px; }
.digits span { display: flex; justify-content: center; }
.digits .frac { font-size: 78px; line-height: 60px; }
.units { align-self: flex-start; margin: 16px 0 0 67px; display: grid; grid-template-columns: 145px 145px 145px; text-align: center; font-size: 20px; line-height: 28px; }
.keys { display: flex; gap: 26px; margin-top: 42px; }
.keys button { width: 66px; height: 66px; border-radius: 50%; background: #fdfdfe; border: 1px solid #e8e9ee; border-bottom-color: #cfd0d4; }
.keys .pause { background: #0067c0; color: #fff; border: 0; }
</style>
